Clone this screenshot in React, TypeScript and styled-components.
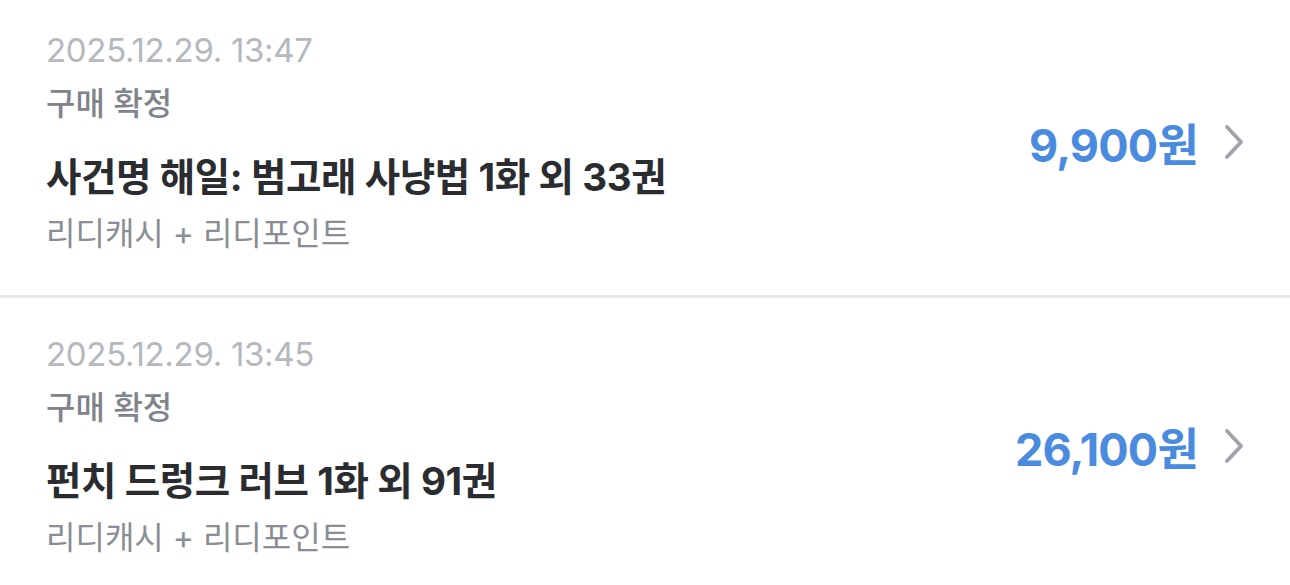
import React from "react";
import styled, { createGlobalStyle } from "styled-components";

const GlobalStyle = createGlobalStyle`
  html, body {
    margin: 0;
    padding: 0;
    background: #fff;
  }
  body {
    font-family: Inter, "Noto Sans CJK KR", sans-serif;
    overflow: hidden;
  }
`;

const List = styled.ul`
  list-style: none;
  margin: -6px 0 0;
  padding: 0;
`;

const Item = styled.li`
  display: flex;
  align-items: center;
  padding: 36px 44px 41px 46px;
  border-bottom: 3px solid #e8e8ea;
`;

const Info = styled.div`
  flex: 1;
  display: flex;
  flex-direction: column;
`;

const Date = styled.span`
  font-size: 33px;
  line-height: 40px;
  color: #b5b8bd;
  letter-spacing: -0.3px;
`;

const Status = styled.span`
  margin-top: 14px;
  font-size: 32px;
  line-height: 40px;
  font-weight: 500;
  color: #80848a;
`;

const Title = styled.span`
  margin-top: 30px;
  font-size: 38.5px;
  line-height: 46px;
  font-weight: 700;
  color: #2a2c30;
  letter-spacing: -0.4px;
`;

const Method = styled.span`
  margin-top: 14px;
  font-size: 32px;
  line-height: 40px;
  color: #8a8e94;
`;

const PriceLink = styled.div`
  display: flex;
  align-items: center;
  gap: 24px;
`;

const Price = styled.span`
  font-size: 45px;
  font-weight: 700;
  color: #4a8be0;
  letter-spacing: -0.8px;
`;

const Chevron = () => (
  <svg width="24" height="36" viewBox="0 0 24 36">
    <polyline
      points="5,3 19,18 5,33"
      fill="none"
      stroke="#a1a4a9"
      strokeWidth="4"
      strokeLinecap="round"
      strokeLinejoin="round"
    />
  </svg>
);

const orders = [
  {
    date: "2025.12.29. 13:47",
    status: "구매 확정",
    title: "사건명 해일: 범고래 사냥법 1화 외 33권",
    method: "리디캐시 + 리디포인트",
    price: "9,900원",
  },
  {
    date: "2025.12.29. 13:45",
    status: "구매 확정",
    title: "펀치 드렁크 러브 1화 외 91권",
    method: "리디캐시 + 리디포인트",
    price: "26,100원",
  },
];

export default function App() {
  return (
    <>
      <GlobalStyle />
      <List>
        {orders.map((o) => (
          <Item key={o.date}>
            <Info>
              <Date>{o.date}</Date>
              <Status>{o.status}</Status>
              <Title>{o.title}</Title>
              <Method>{o.method}</Method>
            </Info>
            <PriceLink>
              <Price>{o.price}</Price>
              <Chevron />
            </PriceLink>
          </Item>
        ))}
      </List>
    </>
  );
}
